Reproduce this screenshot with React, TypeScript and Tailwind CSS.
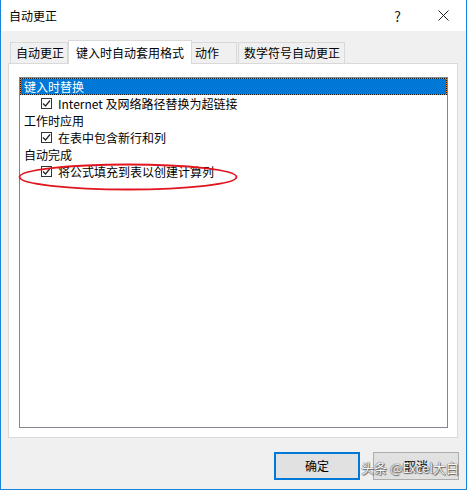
const font = { fontFamily: '"Noto Sans CJK SC", "Noto Sans", sans-serif' };

const CheckBox = () => (
  <span className="w-[11px] h-[11px] border border-[#333333] bg-white flex items-center justify-center shrink-0">
    <svg width="9" height="9" viewBox="0 0 9 9">
      <path d="M1 4.5 L3.5 7 L8 1.5" fill="none" stroke="#222222" strokeWidth="1.2" />
    </svg>
  </span>
);

const CheckRow = ({ label }: { label: string }) => (
  <div className="h-[17px] flex items-center pl-[21px] gap-[6px] text-[12px] leading-none text-black">
    <CheckBox />
    <span>{label}</span>
  </div>
);

const GroupRow = ({ label }: { label: string }) => (
  <div className="h-[17px] flex items-center pl-[4px] text-[12px] leading-none text-black">{label}</div>
);

export default function App() {
  return (
    <div
      className="w-[467px] h-[490px] border-x border-b border-[#1883d7] bg-[#f0f0f0] flex flex-col relative"
      style={font}
    >
      {/* title bar */}
      <div className="h-[31px] bg-white flex items-center shrink-0">
        <span className="pl-[8px] text-[12px] leading-none text-black">自动更正</span>
        <span className="ml-auto text-[14px] leading-none text-[#222222] mr-[37px]">?</span>
        <svg width="11" height="11" viewBox="0 0 11 11" className="mr-[17px]">
          <path d="M0.5 0.5 L10.5 10.5 M10.5 0.5 L0.5 10.5" stroke="#222222" strokeWidth="1" />
        </svg>
      </div>

      <div className="flex flex-col pl-[7px] pt-[9px]">
        {/* tabs */}
        <div className="flex items-end h-[23px] pl-[2px] text-[12px] leading-none text-black">
          <div className="w-[58px] h-[21px] border border-b-0 border-[#d9d9d9] flex items-center pl-[5px]">自动更正</div>
          <div className="w-[124px] h-[24px] -mb-px z-10 border border-b-0 border-[#d9d9d9] bg-white flex items-center pl-[7px]">
            键入时自动套用格式
          </div>
          <div className="w-[45px] h-[21px] border border-b-0 border-l-0 border-[#d9d9d9] flex items-center pl-[3px]">动作</div>
          <div className="w-[107px] h-[21px] border border-b-0 border-[#d9d9d9] ml-px flex items-center pl-[5px]">
            数学符号自动更正
          </div>
        </div>

        {/* panel */}
        <div className="w-[450px] h-[375px] border border-[#d9d9d9] bg-white pl-[10px] pt-[13px]">
          <div className="w-[429px] h-[351px] border border-[#828790] bg-white relative">
            <div className="h-[17px] border border-dotted border-[#1a1a1a] bg-[#e8832a]">
              <div className="h-full bg-[#0078d7] flex items-center pl-[3px] text-[12px] leading-none text-white">
                键入时替换
              </div>
            </div>
            <CheckRow label="Internet 及网络路径替换为超链接" />
            <GroupRow label="工作时应用" />
            <CheckRow label="在表中包含新行和列" />
            <GroupRow label="自动完成" />
            <CheckRow label="将公式填充到表以创建计算列" />

            <svg className="absolute left-[-3px] top-[84px]" width="222" height="30" viewBox="0 0 222 30">
              <ellipse cx="111" cy="15" rx="108.5" ry="12.5" fill="none" stroke="#e0151d" strokeWidth="1.8" />
            </svg>
          </div>
        </div>
      </div>

      {/* buttons */}
      <div className="flex justify-end gap-[13px] pr-[7px] mt-[14px]">
        <button className="w-[86px] h-[28px] border-2 border-[#0078d7] bg-[#e1e1e1] text-[12px] leading-none text-black">
          确定
        </button>
        <button className="w-[86px] h-[28px] border border-[#adadad] bg-[#e1e1e1] text-[12px] leading-none text-black">
          取消
        </button>
      </div>

      <span
        className="absolute left-[360px] top-[461px] text-[13px] leading-none text-[#f4f4f4] whitespace-nowrap"
        style={{ textShadow: "0 0 1px #555, 0 0 1px #555, 1px 1px 1px #666" }}
      >
        头条 @Excel大白
      </span>
    </div>
  );
}
